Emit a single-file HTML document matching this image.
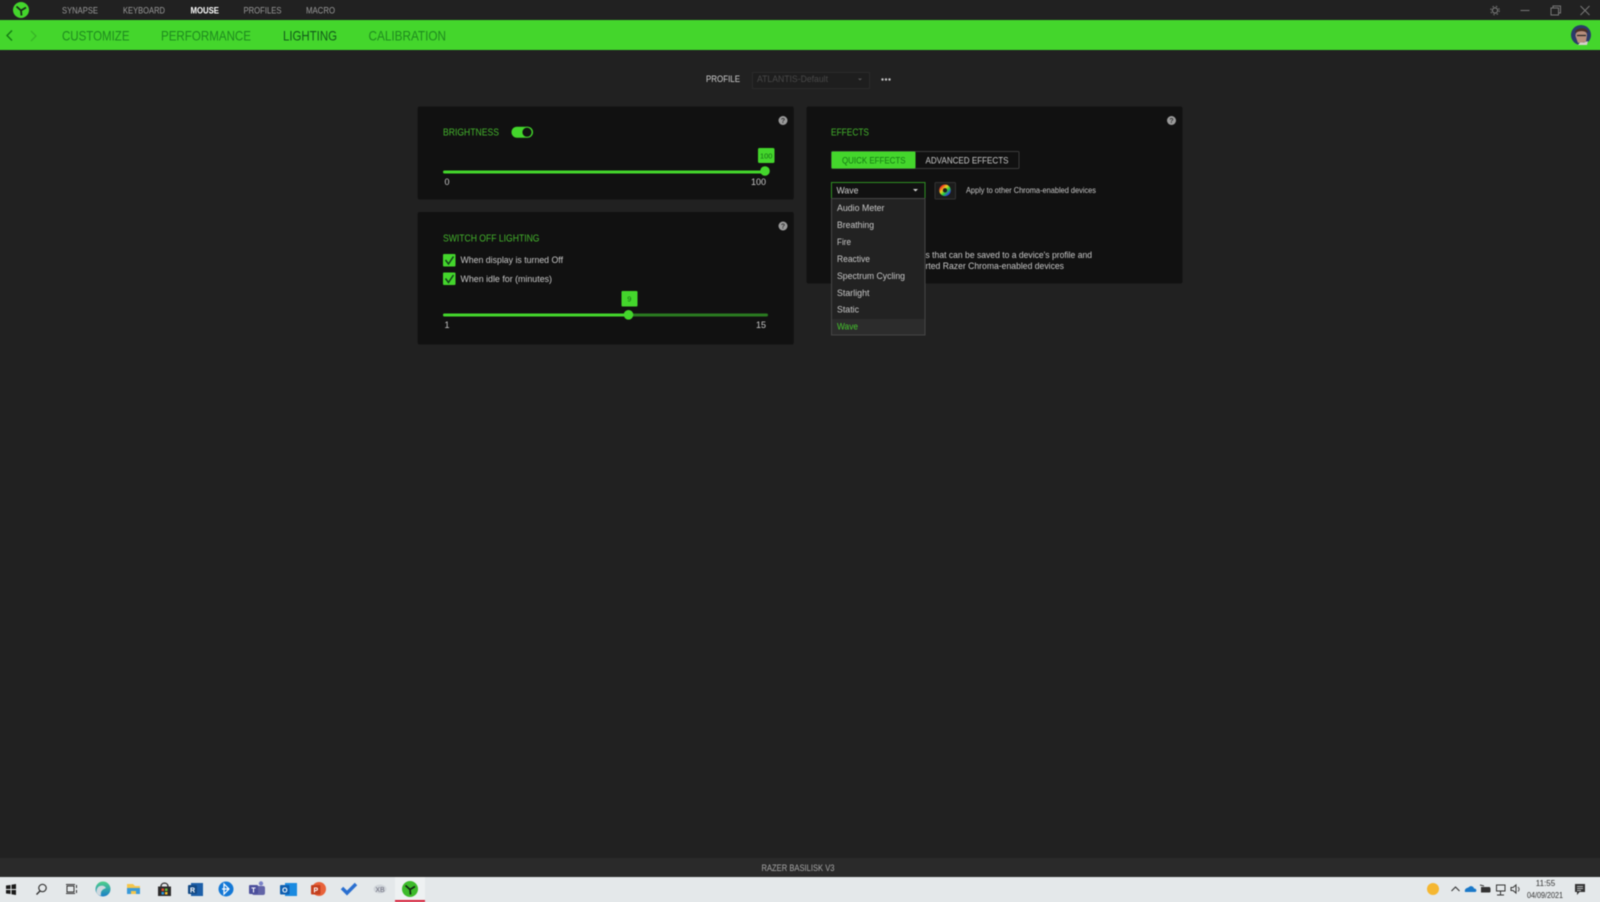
<!DOCTYPE html>
<html><head><meta charset="utf-8"><title>Razer Synapse</title>
<style>
html,body{margin:0;padding:0;background:#212121;width:1600px;height:902px;overflow:hidden}
svg{display:block}
#all{filter:blur(.4px)}
text{font-family:"Liberation Sans",sans-serif}
</style></head><body>
<svg xmlns="http://www.w3.org/2000/svg" width="1600" height="902" viewBox="0 0 1600 902">
<defs><linearGradient id="w" x1="0" y1="0" x2="1" y2="1"><stop offset="0" stop-color="#f02020"/><stop offset=".35" stop-color="#f0d020"/><stop offset=".65" stop-color="#20d040"/><stop offset="1" stop-color="#3030f0"/></linearGradient>
<linearGradient id="e" x1="0" y1="0" x2="0" y2="1"><stop offset="0" stop-color="#4fd08a"/><stop offset="1" stop-color="#1a7fc8"/></linearGradient></defs>
<g id="all">
<rect x="-20" y="-20" width="1640" height="942" fill="#212121"/>
<!-- top nav -->
<circle cx="21" cy="10" r="8" fill="#44d62c"/>
<path d="M21 10.500L16.500 6.500M21 10.500L26 7.500M21 10.500L21.500 15.500" stroke="#1a2a1a" stroke-width="1.800" fill="none"/>
<g font-size="9" fill="#9a9a9a">
<text x="62" y="13.500" textLength="36" lengthAdjust="spacingAndGlyphs">SYNAPSE</text>
<text x="123" y="13.500" textLength="42" lengthAdjust="spacingAndGlyphs">KEYBOARD</text>
<text x="190.500" y="13.500" textLength="28.500" lengthAdjust="spacingAndGlyphs" fill="#fff" font-weight="bold">MOUSE</text>
<text x="243.500" y="13.500" textLength="38" lengthAdjust="spacingAndGlyphs">PROFILES</text>
<text x="306" y="13.500" textLength="29" lengthAdjust="spacingAndGlyphs">MACRO</text>
</g>
<!-- window controls -->
<g stroke="#777" fill="none">
<circle cx="1495" cy="10.500" r="2.600" stroke-width="1.200"/>
<circle cx="1495" cy="10.500" r="4.300" stroke-width="1" stroke-dasharray="1.500 2"/>
<path d="M1520.500 10.500H1529.500"/>
<path d="M1551 8H1558.500V15H1551Z M1553 8V6H1560.500V13H1558.500"/>
<path d="M1580.500 6L1589.500 15M1589.500 6L1580.500 15"/>
</g>
<!-- green bar -->
<rect x="-20" y="20" width="1640" height="30" fill="#44d62c"/>
<path d="M12 30.500L7 35.500L12 40.500" stroke="#137a13" stroke-width="1.400" fill="none"/>
<path d="M31 31L36 36L31 41" stroke="#38b526" stroke-width="1.300" fill="none"/>
<g font-size="14" fill="#1f8a1f">
<text x="62" y="40.700" textLength="67.500" lengthAdjust="spacingAndGlyphs">CUSTOMIZE</text>
<text x="161" y="40.700" textLength="90" lengthAdjust="spacingAndGlyphs">PERFORMANCE</text>
<text x="283" y="40.700" textLength="54" lengthAdjust="spacingAndGlyphs" fill="#12591a">LIGHTING</text>
<text x="368.500" y="40.700" textLength="77.500" lengthAdjust="spacingAndGlyphs">CALIBRATION</text>
</g>
<!-- avatar -->
<circle cx="1581" cy="35" r="10" fill="#2c3a6a"/>
<path d="M1575.500 36C1575 29 1587 29 1587 35L1586 42L1578 43Z" fill="#b88e7c"/>
<path d="M1575 33C1575 27 1588 26 1588 33C1584 30.500 1579 30.500 1575 33Z" fill="#4a2f24"/>
<path d="M1577 35.500H1586" stroke="#222" stroke-width="1.200"/>
<path d="M1578 45H1587L1588 41L1584 42.500H1580Z" fill="#d8d0cc"/>
<!-- profile -->
<text x="706" y="82" font-size="9" fill="#d0d0d0" textLength="34" lengthAdjust="spacingAndGlyphs">PROFILE</text>
<rect x="752.500" y="72.500" width="117" height="16" fill="#1e1e1e" stroke="#2a2a2a"/>
<text x="757" y="82" font-size="9" fill="#484848" textLength="71" lengthAdjust="spacingAndGlyphs">ATLANTIS-Default</text>
<path d="M858 78.500H862L860 80.500Z" fill="#555"/>
<g fill="#c8c8c8"><circle cx="882.500" cy="79.500" r="1.200"/><circle cx="886" cy="79.500" r="1.200"/><circle cx="889.500" cy="79.500" r="1.200"/></g>
<!-- card 1 -->
<rect x="417.700" y="106.500" width="376" height="93" rx="2" fill="#111"/>
<text x="443" y="135.500" font-size="10" fill="#44b52c" textLength="56" lengthAdjust="spacingAndGlyphs">BRIGHTNESS</text>
<rect x="511.500" y="126.700" width="21.500" height="11" rx="5.500" fill="#44d62c"/>
<circle cx="527" cy="132.200" r="5" fill="#111" stroke="#44d62c" stroke-width=".8"/>
<circle cx="783" cy="120.500" r="4.500" fill="#9a9a9a"/>
<text x="783" y="123" font-size="7" fill="#333" text-anchor="middle" font-weight="bold">?</text>
<rect x="758" y="148" width="16.500" height="15" rx="1.500" fill="#44d62c"/>
<text x="766.200" y="158.500" font-size="7.500" fill="#157015" text-anchor="middle">100</text>
<rect x="443" y="170.500" width="323" height="3" rx="1.500" fill="#44d62c"/>
<circle cx="765" cy="171" r="4.800" fill="#44d62c"/>
<g font-size="9" fill="#c8c8c8">
<text x="444.500" y="185">0</text>
<text x="751" y="185">100</text>
</g>
<!-- card 2 -->
<rect x="417.700" y="212" width="376" height="132.500" rx="2" fill="#111"/>
<text x="443" y="241.700" font-size="10" fill="#44b52c" textLength="96.500" lengthAdjust="spacingAndGlyphs">SWITCH OFF LIGHTING</text>
<circle cx="783" cy="226" r="4.500" fill="#9a9a9a"/>
<text x="783" y="228.500" font-size="7" fill="#333" text-anchor="middle" font-weight="bold">?</text>
<rect x="443" y="254" width="12.500" height="12.500" rx="1" fill="#44d62c"/>
<path d="M445.500 260L448.500 264L453.500 256.500" stroke="#12401a" stroke-width="1.500" fill="none"/>
<rect x="443" y="272.500" width="12.500" height="12.500" rx="1" fill="#44d62c"/>
<path d="M445.500 278.500L448.500 282.500L453.500 275" stroke="#12401a" stroke-width="1.500" fill="none"/>
<g font-size="9" fill="#c8c8c8">
<text x="460.500" y="263" textLength="102.500" lengthAdjust="spacingAndGlyphs">When display is turned Off</text>
<text x="460.500" y="282" textLength="91.500" lengthAdjust="spacingAndGlyphs">When idle for (minutes)</text>
<text x="444.500" y="328">1</text>
<text x="756" y="328" textLength="10" lengthAdjust="spacingAndGlyphs">15</text>
</g>
<rect x="621.500" y="291" width="16" height="15.500" rx="1" fill="#44d62c"/>
<text x="629.300" y="301.500" font-size="7.500" fill="#157015" text-anchor="middle">9</text>
<rect x="443" y="313.500" width="325" height="3" rx="1.500" fill="#2a7a20"/>
<rect x="443" y="313.500" width="185" height="3" rx="1.500" fill="#44d62c"/>
<circle cx="628.500" cy="314.800" r="4.800" fill="#44d62c"/>
<!-- card 3 -->
<rect x="806.500" y="106.500" width="376" height="177" rx="2" fill="#111"/>
<text x="831" y="135.500" font-size="10" fill="#44b52c" textLength="38" lengthAdjust="spacingAndGlyphs">EFFECTS</text>
<circle cx="1171.500" cy="120.500" r="4.500" fill="#9a9a9a"/>
<text x="1171.500" y="123" font-size="7" fill="#333" text-anchor="middle" font-weight="bold">?</text>
<rect x="831.500" y="151.500" width="187.500" height="17" rx="1" fill="#111" stroke="#3a3a3a"/>
<rect x="831.500" y="151.500" width="84" height="17" rx="1" fill="#44d62c"/>
<text x="842" y="163.500" font-size="9" fill="#157a15" textLength="63.500" lengthAdjust="spacingAndGlyphs">QUICK EFFECTS</text>
<text x="925.500" y="163.500" font-size="9" fill="#c8c8c8" textLength="83" lengthAdjust="spacingAndGlyphs">ADVANCED EFFECTS</text>
<rect x="831.500" y="182.500" width="93.500" height="16" fill="#111" stroke="#2f8f22"/>
<text x="836.500" y="193.500" font-size="9" fill="#d0d0d0" textLength="22" lengthAdjust="spacingAndGlyphs">Wave</text>
<path d="M913 189H918L915.500 191.500Z" fill="#d0d0d0"/>
<rect x="935" y="182.500" width="20.500" height="16.500" rx="1" fill="#1c1c1c" stroke="#333"/>
<circle cx="945" cy="190.300" r="4" fill="none" stroke="url(#w)" stroke-width="3.600"/>
<text x="966" y="193" font-size="8.500" fill="#c8c8c8" textLength="130" lengthAdjust="spacingAndGlyphs">Apply to other Chroma-enabled devices</text>
<g font-size="9" fill="#c8c8c8">
<text x="925.500" y="258" textLength="166.500" lengthAdjust="spacingAndGlyphs">s that can be saved to a device's profile and</text>
<text x="925.500" y="269" textLength="138.500" lengthAdjust="spacingAndGlyphs">rted Razer Chroma-enabled devices</text>
</g>
<!-- dropdown -->
<rect x="831.500" y="198.500" width="93.500" height="136.500" fill="#222" stroke="#454545"/>
<rect x="832" y="319" width="92.500" height="15.500" fill="#2c2c2c"/>
<g font-size="9" fill="#c8c8c8">
<text x="837" y="211" textLength="47.500" lengthAdjust="spacingAndGlyphs">Audio Meter</text>
<text x="837" y="228" textLength="37" lengthAdjust="spacingAndGlyphs">Breathing</text>
<text x="837" y="245" textLength="14" lengthAdjust="spacingAndGlyphs">Fire</text>
<text x="837" y="262" textLength="33" lengthAdjust="spacingAndGlyphs">Reactive</text>
<text x="837" y="279" textLength="68" lengthAdjust="spacingAndGlyphs">Spectrum Cycling</text>
<text x="837" y="296" textLength="32.500" lengthAdjust="spacingAndGlyphs">Starlight</text>
<text x="837" y="312.500" textLength="22" lengthAdjust="spacingAndGlyphs">Static</text>
<text x="837" y="329.500" textLength="21" lengthAdjust="spacingAndGlyphs" fill="#44c52c">Wave</text>
</g>
<!-- device bar -->
<rect x="-20" y="858" width="1640" height="19" fill="#2a2a2a"/>
<text x="761.500" y="871" font-size="9" fill="#a8a8a8" textLength="73" lengthAdjust="spacingAndGlyphs">RAZER BASILISK V3</text>
<!-- taskbar -->
<rect x="-20" y="877" width="1640" height="45" fill="#e4e8ea"/>
<rect x="395" y="877" width="30" height="25" fill="#eef1f2"/>
<rect x="395" y="900" width="30" height="2" fill="#d8203a"/>
<path d="M6 885.500L10.500 885V889H6ZM11.500 884.800L16 884V889H11.500ZM6 890H10.500V894L6 893.500ZM11.500 890H16V895L11.500 894.200Z" fill="#1a1a1a"/>
<circle cx="42.500" cy="888" r="3.700" fill="none" stroke="#333" stroke-width="1.200"/>
<path d="M40 891L36.500 894.500" stroke="#333" stroke-width="1.400"/>
<path d="M67 886H74V892H67Z M66 884.500H75 M66 893.500H75 M76.500 885V888 M76.500 890V893" fill="none" stroke="#333" stroke-width="1"/>
<circle cx="103" cy="889" r="7.500" fill="url(#e)"/>
<path d="M96.500 892C96 885 104 884 106 888C104 889 100 890 101 895.500C98.500 895.500 97 894 96.500 892Z" fill="#cfd8de"/>
<path d="M127 884H133L135 886H140V894H127Z" fill="#f5c64a"/>
<path d="M127 888H140V894H136V891H131V894H127Z" fill="#3a9ad9"/>
<path d="M158 886.500H171V896H158Z" fill="#2b2b2b"/>
<path d="M161 886.500C161 882 168 882 168 886.500" fill="none" stroke="#2b2b2b" stroke-width="1.300"/>
<rect x="161.500" y="888.500" width="2.500" height="2.500" fill="#e84a2e"/><rect x="165" y="888.500" width="2.500" height="2.500" fill="#6cbf3a"/><rect x="161.500" y="892" width="2.500" height="2.500" fill="#2a9ae0"/><rect x="165" y="892" width="2.500" height="2.500" fill="#f5c02a"/>
<rect x="191" y="883" width="12" height="13" fill="#1d5fa8"/>
<rect x="188" y="885" width="9" height="9" rx="1" fill="#134a86"/>
<text x="192.500" y="892.500" font-size="7" font-weight="bold" fill="#fff" text-anchor="middle">R</text>
<circle cx="226" cy="889" r="7.500" fill="#1378d6"/>
<path d="M224 884L229 889L224 894Z M229 889H222" fill="none" stroke="#fff" stroke-width="1.200"/>
<rect x="252" y="886" width="13" height="9" rx="2" fill="#6264a7"/>
<circle cx="261" cy="883.500" r="2.200" fill="#7b83c8"/>
<rect x="249" y="885" width="9" height="9" rx="1" fill="#4b4f9c"/>
<text x="253.500" y="892.500" font-size="7" font-weight="bold" fill="#fff" text-anchor="middle">T</text>
<rect x="285" y="883" width="12" height="13" fill="#1a8ae0"/>
<rect x="280" y="885" width="9.500" height="9.500" rx="1" fill="#0f5fb0"/>
<text x="284.800" y="892.500" font-size="7" font-weight="bold" fill="#fff" text-anchor="middle">O</text>
<circle cx="319" cy="889" r="7" fill="#e8623a"/>
<rect x="311" y="885" width="9.500" height="9.500" rx="1" fill="#c4401e"/>
<text x="315.800" y="892.500" font-size="7" font-weight="bold" fill="#fff" text-anchor="middle">P</text>
<path d="M342 888L347 893L356 884" fill="none" stroke="#2a6fd0" stroke-width="3.500"/>
<ellipse cx="380" cy="889" rx="6.500" ry="4.500" fill="#d0d5da"/>
<text x="380" y="892" font-size="7" fill="#667" text-anchor="middle">XB</text>
<circle cx="410" cy="889" r="8" fill="#3dbb2a"/>
<path d="M410 889.500L405.500 885.500M410 889.500L415 886.500M410 889.500L410.500 894.500" stroke="#142a14" stroke-width="1.700" fill="none"/>
<!-- tray -->
<circle cx="1433" cy="889" r="6" fill="#f5b731"/>
<path d="M1451.500 891L1455.500 887L1459.500 891" fill="none" stroke="#333" stroke-width="1.100"/>
<path d="M1465 892C1464 888 1468 888 1469 887C1471 885 1474 887 1474 888.500C1477 888.500 1477 892 1475 892Z" fill="#1a78c8"/>
<rect x="1481" y="887" width="9" height="5.500" fill="#333"/><path d="M1480 885L1484 886M1490 892V888" stroke="#333"/>
<path d="M1496.500 885H1505V891H1496.500Z M1500.500 891V895 M1497 895H1504" fill="none" stroke="#333"/>
<path d="M1511 887.500H1513L1516 885V893L1513 890.500H1511Z" fill="none" stroke="#333"/>
<path d="M1518 887C1519.500 888.500 1519.500 890 1518 891.500" fill="none" stroke="#555"/>
<g font-size="8" fill="#333" text-anchor="middle">
<text x="1545.500" y="886">11:55</text>
<text x="1545" y="898" textLength="36" lengthAdjust="spacingAndGlyphs">04/09/2021</text>
</g>
<path d="M1575 884H1585V892H1579.500L1577 895V892H1575Z" fill="#333"/>
<path d="M1577 886.500H1583M1577 888.500H1583M1577 890.500H1581" stroke="#e4e8ea" stroke-width=".7"/>
</g>
</svg>
</body></html>
